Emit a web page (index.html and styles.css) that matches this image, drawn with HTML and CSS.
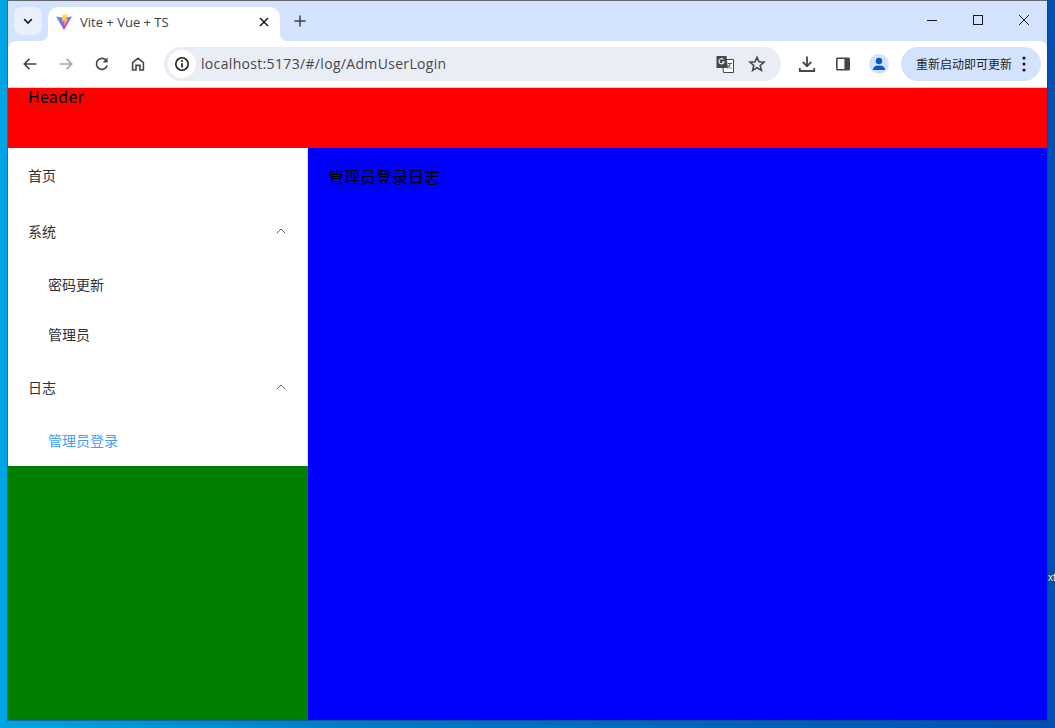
FILE: index.html
```html
<!DOCTYPE html>
<html lang="en">
<head>
    <meta charset="UTF-8">
    <meta name="viewport" content="width=device-width, initial-scale=1.0">
    <title>Vite + Vue + TS</title>
    <link rel="stylesheet" href="styles.css">
</head>
<body>
    <div class="desktop-label">xt</div>
    <div class="window">
        <div class="tabstrip">
            <div class="tab-search">
                <svg width="12" height="12" viewBox="0 0 12 12"><path d="M2.2 4.2 6 8l3.8-3.8" fill="none" stroke="#1f1f1f" stroke-width="1.7"/></svg>
            </div>
            <div class="tab">
                <svg class="favicon" width="16" height="16" viewBox="0 0 16 16">
                    <defs>
                        <linearGradient id="vite-a" x1="0" y1="0" x2="0.6" y2="1">
                            <stop offset="0" stop-color="#41a5ff"/>
                            <stop offset="1" stop-color="#bd34fe"/>
                        </linearGradient>
                        <linearGradient id="vite-b" x1="0" y1="0" x2="0.5" y2="1">
                            <stop offset="0" stop-color="#ffea83"/>
                            <stop offset="1" stop-color="#ffa800"/>
                        </linearGradient>
                    </defs>
                    <path d="M0 2.4 8 3.8l8-1.4-8 13.6z" fill="url(#vite-a)"/>
                    <path d="M6 .6 11.4 0l-1 5.4 2-.5L8 12.2l.6-5.2-2.2.4z" fill="url(#vite-b)"/>
                </svg>
                <span class="tab-title">Vite + Vue + TS</span>
                <svg class="tab-close" width="10" height="10" viewBox="0 0 10 10"><path d="M1 1l8 8M9 1l-8 8" stroke="#1f1f1f" stroke-width="1.6"/></svg>
            </div>
            <svg class="new-tab" width="12" height="12" viewBox="0 0 12 12"><path d="M6 .5v11M.5 6h11" stroke="#3c4043" stroke-width="1.5"/></svg>
            <div class="window-controls">
                <svg width="10" height="10" viewBox="0 0 10 10"><path d="M0 5.500h10" stroke="#1a1a1a"/></svg>
                <svg width="10" height="10" viewBox="0 0 10 10"><rect x=".5" y=".5" width="9" height="9" fill="none" stroke="#1a1a1a"/></svg>
                <svg width="10" height="10" viewBox="0 0 10 10"><path d="M0 0l10 10M10 0 0 10" stroke="#1a1a1a"/></svg>
            </div>
        </div>
        <div class="toolbar">
            <svg class="tool" width="16" height="16" viewBox="0 0 16 16"><path d="M14.5 8H2.5M7.5 2.8 2.3 8l5.2 5.2" fill="none" stroke="#474747" stroke-width="1.7"/></svg>
            <svg class="tool" width="16" height="16" viewBox="0 0 16 16"><path d="M1.5 8h12M8.5 2.8 13.7 8l-5.2 5.2" fill="none" stroke="#a8a8a8" stroke-width="1.7"/></svg>
            <svg class="tool" width="16" height="16" viewBox="0 0 16 16"><path d="M13.2 9.6A5.500 5.500 0 1 1 12 4.200" fill="none" stroke="#474747" stroke-width="1.700"/><path d="M13.600 1.400v5h-5z" fill="#474747"/></svg>
            <svg class="tool" width="16" height="16" viewBox="0 0 16 16"><path d="M2.600 14V6.600L8 2.200l5.400 4.400V14H10V9.400H6V14z" fill="none" stroke="#474747" stroke-width="1.600"/></svg>
            <div class="omnibox">
                <div class="site-info">
                    <svg width="16" height="16" viewBox="0 0 16 16"><circle cx="8" cy="8" r="6.200" fill="none" stroke="#1f1f1f" stroke-width="1.600"/><path d="M8 7.200V11.600" stroke="#1f1f1f" stroke-width="1.700"/><circle cx="8" cy="5" r="1" fill="#1f1f1f"/></svg>
                </div>
                <span class="url">localhost:5173/#/log/AdmUserLogin</span>
                <svg class="translate" width="18" height="18" viewBox="0 0 18 18">
                    <path d="M6 4.500h11.500v13H7.500z" fill="#fff" stroke="#474747" stroke-width="1"/>
                    <path d="M.5 1h10l1.400 12H.5z" fill="#474747"/>
                    <path d="M8.200 6.400a2.600 2.600 0 1 1-.8-2M6 7h2.200" fill="none" stroke="#fff" stroke-width="1.100"/>
                    <path d="M12 8.500h4M14 8.500c0 2.500-1 4-2.200 5M12.400 10c.6 1.700 1.800 3 3.200 3.500" fill="none" stroke="#474747" stroke-width=".9"/>
                </svg>
                <svg class="star" width="18" height="18" viewBox="0 0 18 18"><path d="M9 2.200l2 4.600 5 .4-3.800 3.300 1.200 4.900L9 12.800l-4.400 2.600 1.200-4.900L2 7.200l5-.4z" fill="none" stroke="#474747" stroke-width="1.600"/></svg>
            </div>
            <svg class="action" width="18" height="18" viewBox="0 0 18 18"><path d="M9 1.500v9.500M4.800 7 9 11.200 13.200 7M1.800 13v3h14.400v-3" fill="none" stroke="#474747" stroke-width="1.800"/></svg>
            <svg class="action panel-icon" width="16" height="16" viewBox="0 0 16 16"><rect x="1" y="1.500" width="14" height="13" rx="1.500" fill="#474747"/><rect x="2.600" y="3" width="6.800" height="10" fill="#fff"/></svg>
            <div class="avatar">
                <svg width="16" height="16" viewBox="0 0 16 16"><circle cx="8" cy="5" r="3.200" fill="#0b57d0"/><path d="M1.800 14c0-3.200 3-4.600 6.200-4.600s6.200 1.400 6.200 4.600z" fill="#0b57d0"/></svg>
            </div>
            <div class="update-chip">
                <span>重新启动即可更新</span>
                <svg width="4" height="16" viewBox="0 0 4 16"><circle cx="2" cy="2" r="1.600" fill="#1f1f1f"/><circle cx="2" cy="8" r="1.600" fill="#1f1f1f"/><circle cx="2" cy="14" r="1.600" fill="#1f1f1f"/></svg>
            </div>
        </div>
        <div class="page">
            <header class="page-header">Header</header>
            <div class="page-body">
                <aside class="aside">
                    <ul class="menu">
                        <li class="menu-item">首页</li>
                        <li class="menu-item">系统
                            <svg class="arrow" width="10" height="6" viewBox="0 0 10 6"><path d="M.8 5.200 5 1l4.200 4.200" fill="none" stroke="#606266"/></svg>
                        </li>
                        <li class="menu-sub">密码更新</li>
                        <li class="menu-sub">管理员</li>
                        <li class="menu-item">日志
                            <svg class="arrow" width="10" height="6" viewBox="0 0 10 6"><path d="M.8 5.200 5 1l4.200 4.200" fill="none" stroke="#606266"/></svg>
                        </li>
                        <li class="menu-sub active">管理员登录</li>
                    </ul>
                </aside>
                <main class="main">管理员登录日志</main>
            </div>
        </div>
    </div>
</body>
</html>
```

FILE: styles.css
```css
* {
    margin: 0;
    padding: 0;
    box-sizing: border-box;
}

html, body {
    height: 100%;
    overflow: hidden;
}

body {
    position: relative;
    padding: 1px 8px 8px;
    background: linear-gradient(90deg, #00a4e4 0%, #0078c8 35%, #0050b4 100%);
    font-family: "Noto Sans CJK SC", sans-serif;
}

.desktop-label {
    position: absolute;
    left: 1048px;
    top: 571px;
    font: 10px/14px "Liberation Sans", sans-serif;
    color: #fff;
    text-shadow: 0 0 2px #000;
}

.window {
    height: 719px;
    display: flex;
    flex-direction: column;
    background: #d3e3fd;
    box-shadow: 0 -1px 0 0 #63676c, 0 0 0 1px rgba(30, 60, 100, 0.5);
}

/* tab strip */
.tabstrip {
    height: 40px;
    flex: none;
    display: flex;
    align-items: flex-end;
    background: #d3e3fd;
}

.tab-search {
    width: 28px;
    height: 28px;
    margin: 0 6px 6px 6px;
    border-radius: 8px;
    background: #e9f0fc;
    display: flex;
    align-items: center;
    justify-content: center;
}

.tab {
    position: relative;
    width: 232px;
    height: 34px;
    display: flex;
    align-items: center;
    padding: 0 11px 4px 8px;
    background: #fff;
    border-radius: 10px 10px 0 0;
}

.tab::before,
.tab::after {
    content: "";
    position: absolute;
    bottom: 0;
    width: 8px;
    height: 8px;
}

.tab::before {
    left: -8px;
    background: radial-gradient(circle at 0 0, #d3e3fd 8px, #fff 8.5px);
}

.tab::after {
    right: -8px;
    background: radial-gradient(circle at 100% 0, #d3e3fd 8px, #fff 8.5px);
}

.favicon {
    margin-right: 8px;
}

.tab-title {
    flex: 1;
    font: 13px "Open Sans", sans-serif;
    color: #3c4043;
}

.new-tab {
    margin: 0 0 14px 14px;
}

.window-controls {
    margin-left: auto;
    width: 138px;
    height: 38px;
    display: flex;
    align-items: center;
    justify-content: space-between;
    padding: 0 18px 0 18px;
    align-self: flex-start;
}

/* address bar */
.toolbar {
    height: 47px;
    flex: none;
    display: flex;
    align-items: center;
    padding: 0 6px 1px 0;
    background: #fff;
    border-radius: 8px 8px 0 0;
    border-bottom: 1px solid #d4d4d4;
}

.tool {
    margin-left: 14px;
    margin-right: 6px;
}

.omnibox {
    width: 617px;
    height: 34px;
    margin-left: 12px;
    display: flex;
    align-items: center;
    padding: 0 15px 0 4px;
    border-radius: 17px;
    background: #e9eef6;
}

.site-info {
    width: 28px;
    height: 28px;
    border-radius: 50%;
    background: #fff;
    display: flex;
    align-items: center;
    justify-content: center;
}

.url {
    flex: 1;
    margin-left: 5px;
    font: 14px "Open Sans", sans-serif;
    letter-spacing: 0.33px;
    color: #474747;
}

.star {
    margin-left: 14px;
}

.action {
    margin-left: 17px;
}

.panel-icon {
    margin-left: 19px;
}

.avatar {
    width: 20px;
    height: 20px;
    margin-left: 18px;
    border-radius: 50%;
    background: #d3e3fd;
    display: flex;
    align-items: center;
    justify-content: center;
}

.update-chip {
    width: 140px;
    height: 34px;
    margin-left: 12px;
    display: flex;
    align-items: center;
    justify-content: space-between;
    padding: 0 15px 0 15px;
    border-radius: 17px;
    background: #d3e3fd;
    font-size: 12px;
    color: #1f1f1f;
}

/* the vue page */
.page {
    flex: 1;
    min-height: 0;
    display: flex;
    flex-direction: column;
}

.page-header {
    height: 60px;
    flex: none;
    padding: 0 20px;
    background: red;
    font-size: 16px;
    line-height: 16px;
    letter-spacing: 0.3px;
    color: #000;
}

.page-body {
    flex: 1;
    min-height: 0;
    display: flex;
}

.aside {
    width: 300px;
    flex: none;
    background: green;
}

.menu {
    list-style: none;
    background: #fff;
    border-right: 1px solid #dcdfe6;
    font-size: 14px;
    color: #303133;
}

.menu-item {
    height: 56px;
    display: flex;
    align-items: center;
    justify-content: space-between;
    padding: 0 20px 2px;
}

.arrow {
    margin-right: 1px;
}

.menu-sub {
    height: 50px;
    display: flex;
    align-items: center;
    padding: 0 0 2px 40px;
}

.menu-sub.active {
    color: #409eff;
}

.main {
    flex: 1;
    padding: 20px;
    background: #00f;
    font-size: 16px;
    line-height: 16px;
    color: #000;
}
```
